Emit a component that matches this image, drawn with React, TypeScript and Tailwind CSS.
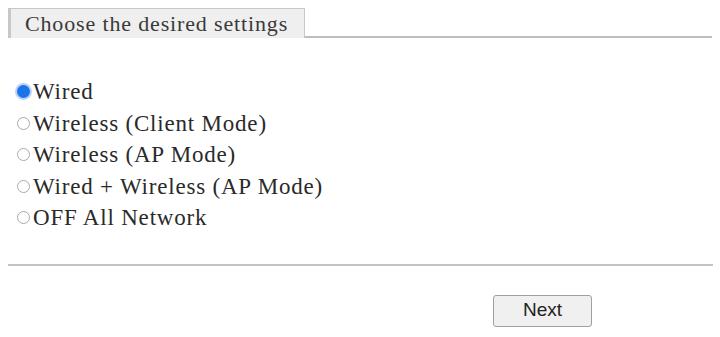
import React, { useState } from "react";

const options = [
  "Wired",
  "Wireless (Client Mode)",
  "Wireless (AP Mode)",
  "Wired + Wireless (AP Mode)",
  "OFF All Network",
];

export default function App() {
  const [sel, setSel] = useState(0);
  return (
    <div className="w-[720px] h-[337px] bg-white overflow-hidden px-[8px] pt-[8px]" style={{ fontFamily: '"Liberation Serif", "Times New Roman", serif' }}>
      <div className="flex items-end">
        <div className="h-[30px] w-[297px] bg-[#efefef] border border-b-0 border-[#c8c8c8] border-l-[3px] flex items-center pl-[14px] text-[22px] tracking-[0.85px] leading-none text-[#3a3a3a]">
          Choose the desired settings
        </div>
        <div className="flex-1 h-[2px] bg-[#bdbdbd]" />
      </div>
      <div className="mt-[38px] flex flex-col pl-[9px]">
        {options.map((o, i) => (
          <label key={o} className="flex items-center h-[31.5px] text-[23px] tracking-[0.8px] leading-none text-[#2a2a2a] cursor-pointer" onClick={() => setSel(i)}>
            <span className={"w-[13px] h-[13px] rounded-full mr-[3px] shrink-0 flex items-center justify-center " + (sel === i ? "bg-[#1a73e8] ring-2 ring-[#b9d2f5]" : "border border-[#aaaaaa] bg-white")}>
            </span>
            {o}
          </label>
        ))}
      </div>
      <div className="mt-[30px] h-[2px] bg-[#c4c4c4] w-[705px]" />
      <div className="mt-[29px] flex">
        <button className="ml-[485px] w-[99px] h-[32px] bg-[#f0f0f0] border border-[#a0a0a0] rounded-[3px] text-[19px] text-[#222]" style={{ fontFamily: '"Liberation Sans", Arial, sans-serif' }}>
          Next
        </button>
      </div>
    </div>
  );
}
